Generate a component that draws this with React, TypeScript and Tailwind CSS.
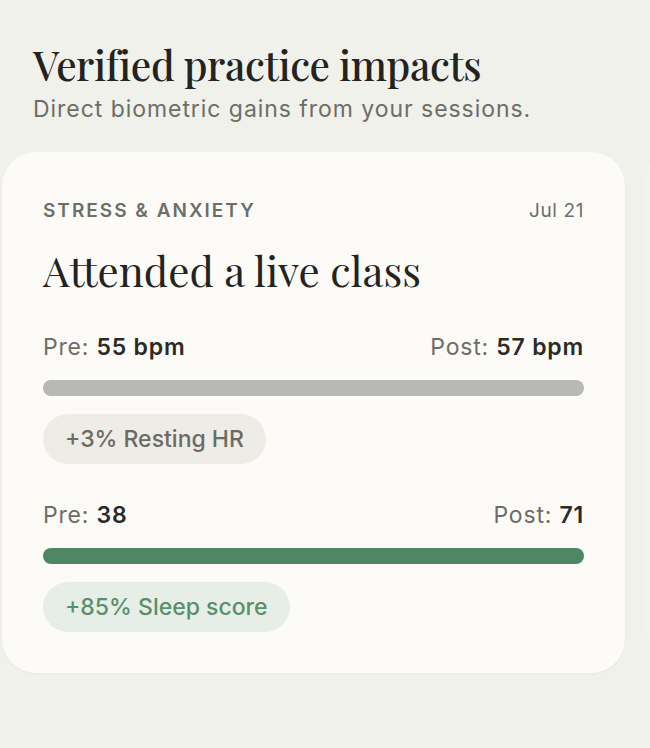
import React from "react";

const serif = "font-['Playfair_Display','Liberation_Serif','DejaVu_Serif',serif]";
const sans = "font-['Inter','Liberation_Sans',sans-serif]";

interface Metric {
  pre: string;
  post: string;
  barClass: string;
  pillClass: string;
  label: string;
}

const metrics: Metric[] = [
  {
    pre: "55 bpm",
    post: "57 bpm",
    barClass: "bg-[#b8b9b4]",
    pillClass: "bg-[#efece7] text-[#6b6b66]",
    label: "+3% Resting HR",
  },
  {
    pre: "38",
    post: "71",
    barClass: "bg-[#4f8664]",
    pillClass: "bg-[#e7eee8] text-[#5a8e6c]",
    label: "+85% Sleep score",
  },
];

function MetricBlock({ m }: { m: Metric }) {
  return (
    <div className="flex flex-col">
      <div className="flex items-center justify-between text-[23px] leading-[28px] tracking-[0.8px] text-[#6d6d68]">
        <span>
          Pre: <span className="font-semibold text-[#2a2a27]">{m.pre}</span>
        </span>
        <span>
          Post: <span className="font-semibold text-[#2a2a27]">{m.post}</span>
        </span>
      </div>
      <div className={`mt-[19px] h-4 w-full rounded-full ${m.barClass}`} />
      <div className="mt-[18px] flex">
        <span
          className={`flex h-[50px] items-center rounded-full px-[22px] text-[23px] font-medium ${m.pillClass}`}
        >
          {m.label}
        </span>
      </div>
    </div>
  );
}

export default function App() {
  return (
    <div className={`relative h-[748px] w-[650px] overflow-hidden bg-[#f1f1ec] ${sans}`}>
      {/* header */}
      <div className="px-[33px] pt-[39px]">
        <h1 className={`${serif} text-[40.5px] leading-[50px] font-medium tracking-[-0.4px] text-[#23231f]`}>
          Verified practice impacts
        </h1>
        <p className="mt-[6px] text-[23px] leading-[28px] tracking-[0.95px] text-[#6d6d68]">
          Direct biometric gains from your sessions.
        </p>
      </div>

      {/* card row */}
      <div className="mt-[29px] flex gap-[18px] pl-[2px]">
        <div className="w-[623px] flex-none rounded-[34px] bg-[#fcfbf8] px-[41px] pt-[47px] pb-[41px] shadow-[0_1px_3px_rgba(0,0,0,0.04)]">
          <div className="flex items-center justify-between text-[19px] leading-[24px]">
            <span className="font-semibold tracking-[2px] text-[#6c6e69]">STRESS &amp; ANXIETY</span>
            <span className="tracking-[0.6px] text-[#6c6e69]">Jul 21</span>
          </div>
          <h2 className={`${serif} mt-[25px] text-[42px] leading-[44px] text-[#23231f]`}>
            Attended a live class
          </h2>
          <div className="mt-[41px] flex flex-col gap-[37px]">
            {metrics.map((m) => (
              <MetricBlock key={m.label} m={m} />
            ))}
          </div>
        </div>
        <div className="h-[500px] w-[200px] flex-none rounded-[34px] bg-[#f2f2ee]" />
      </div>
    </div>
  );
}
